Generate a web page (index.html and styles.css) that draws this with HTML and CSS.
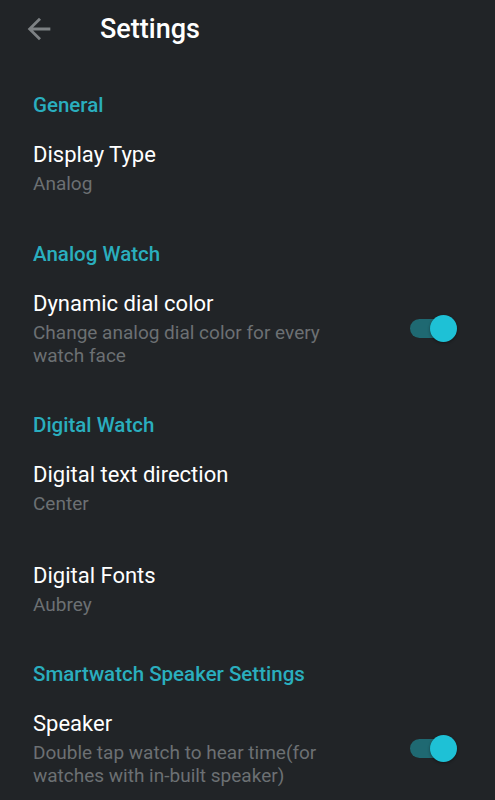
FILE: index.html
```html
<!DOCTYPE html>
<html>
<head>
<meta charset="utf-8">
<link rel="stylesheet" href="styles.css">
</head>
<body>
<div class="app">
  <header class="toolbar">
    <svg class="back" width="24" height="24" viewBox="0 0 24 24"><path d="M20 11H7.83l5.59-5.59L12 4l-8 8 8 8 1.41-1.41L7.83 13H20v-2z" fill="#7d8184"/></svg>
    <h1 class="title">Settings</h1>
  </header>
  <main class="list">
    <div class="cat">General</div>
    <div class="pref">
      <div class="text">
        <div class="ptitle">Display Type</div>
        <div class="psum">Analog</div>
      </div>
    </div>
    <div class="cat">Analog Watch</div>
    <div class="pref">
      <div class="text">
        <div class="ptitle">Dynamic dial color</div>
        <div class="psum">Change analog dial color for every watch face</div>
      </div>
      <div class="switch"><span class="track"></span><span class="thumb"></span></div>
    </div>
    <div class="cat">Digital Watch</div>
    <div class="pref">
      <div class="text">
        <div class="ptitle">Digital text direction</div>
        <div class="psum">Center</div>
      </div>
    </div>
    <div class="pref">
      <div class="text">
        <div class="ptitle">Digital Fonts</div>
        <div class="psum">Aubrey</div>
      </div>
    </div>
    <div class="cat">Smartwatch Speaker Settings</div>
    <div class="pref">
      <div class="text">
        <div class="ptitle">Speaker</div>
        <div class="psum">Double tap watch to hear time(for watches with in-built speaker)</div>
      </div>
      <div class="switch"><span class="track"></span><span class="thumb"></span></div>
    </div>
  </main>
</div>
</body>
</html>
```
FILE: styles.css
```css
html, body {
  margin: 0;
  padding: 0;
  background: #212427;
  font-family: Roboto, "Noto Sans", sans-serif;
}
.app {
  width: 495px;
  height: 800px;
  overflow: hidden;
  background: #212427;
}
.toolbar {
  height: 58px;
  display: flex;
  align-items: center;
}
.back {
  width: 34px;
  height: 34px;
  margin-left: 21.5px;
}
.title {
  margin: 0 0 0 44.5px;
  font-size: 27px;
  font-weight: 500;
  color: #ffffff;
}
.list {
  padding-top: 12px;
}
.cat {
  padding: 22px 33px 0;
  line-height: 26px;
  font-size: 20.5px;
  font-weight: 500;
  color: #2aaebe;
}
.pref {
  display: flex;
  align-items: center;
  padding: 23px 33px 23.5px 33px;
}
.text {
  flex: 1;
  max-width: 310px;
}
.ptitle {
  font-size: 22px;
  line-height: 28px;
  color: #ffffff;
}
.psum {
  margin-top: 3px;
  font-size: 19px;
  line-height: 23px;
  color: #6c7073;
}
.switch {
  position: relative;
  width: 47px;
  height: 27px;
  margin-left: auto;
  margin-right: 5px;
}
.track {
  position: absolute;
  left: 0;
  top: 4px;
  width: 46px;
  height: 19px;
  border-radius: 10px;
  background: #1f6972;
}
.thumb {
  position: absolute;
  right: 0;
  top: 0;
  width: 27px;
  height: 27px;
  border-radius: 50%;
  background: #1ec1d6;
  box-shadow: 0 1px 3px rgba(0,0,0,0.4);
}
```
